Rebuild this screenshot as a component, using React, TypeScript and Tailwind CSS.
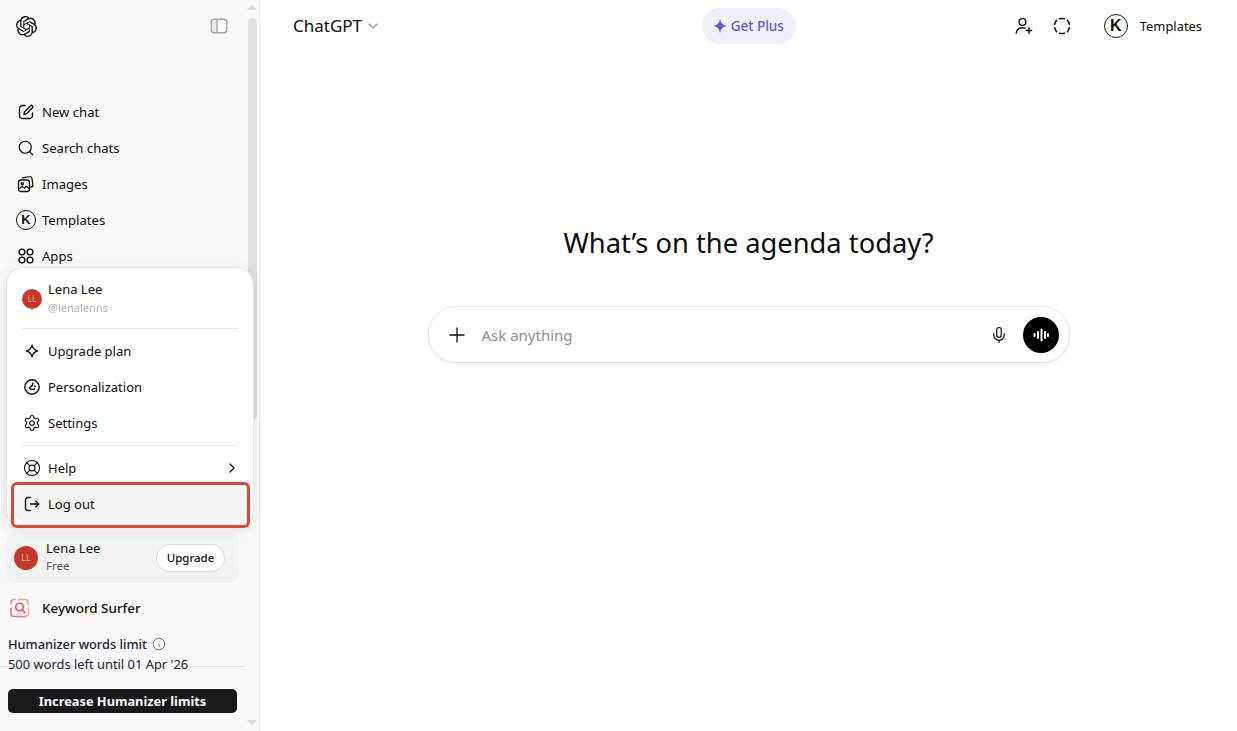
import { ChevronDown, ChevronRight, Info, Mic, Plus, Search, Settings, LifeBuoy } from "lucide-react";
import { SiOpenai } from "react-icons/si";

function KBadge({ size }: { size: "sm" | "lg" }) {
  return (
    <span
      className={
        size === "lg"
          ? "flex h-6 w-6 shrink-0 items-center justify-center rounded-full border-[1.5px] border-[#0d0d0d] font-['Liberation_Sans',sans-serif] text-[16px] font-bold text-[#0d0d0d]"
          : "flex h-5 w-5 shrink-0 items-center justify-center rounded-full border-[1.5px] border-[#0d0d0d] font-['Liberation_Sans',sans-serif] text-[13px] font-bold text-[#0d0d0d]"
      }
    >
      K
    </span>
  );
}

function PenIcon() {
  return (
    <svg width="18" height="18" viewBox="0 0 18 18" fill="none" stroke="#0d0d0d" strokeWidth="1.4" strokeLinecap="round" strokeLinejoin="round">
      <path d="M8 2.500H5.500a3 3 0 0 0-3 3v7a3 3 0 0 0 3 3h7a3 3 0 0 0 3-3V10" />
      <path d="M7 11.200l.5-2.500 6-6a1.400 1.400 0 0 1 2 2l-6 6-2.500.5z" />
    </svg>
  );
}

function ImagesIcon() {
  return (
    <svg width="18" height="18" viewBox="0 0 18 18" fill="none" stroke="#0d0d0d" strokeWidth="1.3" strokeLinecap="round" strokeLinejoin="round">
      <rect x="1.500" y="5" width="11" height="11.500" rx="2.500" />
      <path d="M5.500 2.800l7-1.200a2 2 0 0 1 2.400 1.700l1 6.200a2.400 2.400 0 0 1-2 2.700" />
      <circle cx="5.300" cy="8.800" r="1.100" />
      <path d="M1.800 14l3.400-2.600 2.200 1.700 2-1.900 2.600 2.400" />
    </svg>
  );
}

function AppsIcon() {
  return (
    <svg width="18" height="18" viewBox="0 0 18 18" fill="none" stroke="#0d0d0d" strokeWidth="1.4">
      <circle cx="5" cy="5" r="2.900" />
      <circle cx="13" cy="5" r="2.900" />
      <circle cx="5" cy="13" r="2.900" />
      <circle cx="13" cy="13" r="2.900" />
    </svg>
  );
}

function SparkleIcon() {
  return (
    <svg width="16" height="16" viewBox="0 0 16 16" fill="none" stroke="#0d0d0d" strokeWidth="1.300" strokeLinejoin="round">
      <path d="M8 2c.5 3 2.300 5.200 5.600 6-3.300.8-5.100 3-5.600 6-.5-3-2.300-5.200-5.600-6 3.300-.8 5.100-3 5.600-6z" />
    </svg>
  );
}

function PersonalizeIcon() {
  return (
    <svg width="18" height="18" viewBox="0 0 18 18" fill="none" stroke="#0d0d0d" strokeWidth="1.400" strokeLinecap="round">
      <circle cx="9" cy="9" r="7.200" />
      <path d="M9.800 5c.1 2-1 3.600-3.400 4.600.3 1.700 2.800 2.700 5.200 1.200" />
      <circle cx="11.800" cy="8.200" r=".3" />
    </svg>
  );
}

function LogoutIcon() {
  return (
    <svg width="18" height="18" viewBox="0 0 18 18" fill="none" stroke="#0d0d0d" strokeWidth="1.400" strokeLinecap="round" strokeLinejoin="round">
      <path d="M7.500 2.500H5a2.500 2.500 0 0 0-2.500 2.500v8A2.500 2.500 0 0 0 5 15.500h2.500" />
      <path d="M7.500 9H15.500M12.800 6l3 3-3 3" />
    </svg>
  );
}

function PanelIcon() {
  return (
    <svg width="18" height="18" viewBox="0 0 18 18" fill="none" stroke="#a3a3a3" strokeWidth="1.400">
      <rect x="2" y="3" width="5" height="12" rx="2" fill="#ececec" stroke="none" />
      <rect x="1.200" y="2.200" width="15.600" height="13.600" rx="3" />
      <path d="M7 2.500v13" />
    </svg>
  );
}

function AddUserIcon() {
  return (
    <svg width="18" height="18" viewBox="0 0 18 18" fill="none" stroke="#0d0d0d" strokeWidth="1.400" strokeLinecap="round">
      <circle cx="7.500" cy="5" r="3.400" />
      <path d="M1.200 16c.4-3.200 3-5.300 6.300-5.300 1 0 1.800.2 2.500.5" />
      <path d="M14 10.800v5.400M11.300 13.500h5.400" />
    </svg>
  );
}

function TempChatIcon() {
  return (
    <svg width="18" height="18" viewBox="0 0 18 18" fill="none" stroke="#0d0d0d" strokeWidth="1.500" strokeLinecap="round">
      <path d="M6.500 1.800c1.600-.4 3.400-.4 5 0" />
      <path d="M14.400 3.400c1 1 1.700 2.400 1.900 4" />
      <path d="M16.300 10.700c-.2 1.500-.9 2.900-1.900 3.900" />
      <path d="M11.500 16.200c-1.600.4-3.400.4-5 0" />
      <path d="M3.600 14.600c-1-1-1.700-2.400-1.900-3.900" />
      <path d="M1.700 7.400c.2-1.600.9-3 1.900-4" />
    </svg>
  );
}

function WaveIcon() {
  return (
    <svg width="20" height="20" viewBox="0 0 20 20" fill="none" stroke="#fff" strokeWidth="2" strokeLinecap="round">
      <path d="M3.500 9v2M7 7v6M10.500 4.500v11M14 7v6M17 9v2" />
    </svg>
  );
}

function GetPlusStar() {
  return (
    <svg width="14" height="14" viewBox="0 0 14 14" fill="#5e5cd6">
      <path d="M7 0c.6 4 2.800 6.300 7 7-4.200.7-6.400 3-7 7-.6-4-2.800-6.300-7-7 4.200-.7 6.400-3 7-7z" />
    </svg>
  );
}

function SurferLogo() {
  return (
    <svg width="20" height="20" viewBox="0 0 20 20" fill="none" strokeWidth="1.600" strokeLinecap="round">
      <path d="M5 1.500H4A3 3 0 0 0 1 4.500V6" stroke="#f98b8b" />
      <path d="M1 10v5.500a3 3 0 0 0 3 3h11" stroke="#f9648c" />
      <path d="M9 1.500h6a3 3 0 0 1 3 3v2" stroke="#f9a08b" />
      <path d="M18.500 10v5a3 3 0 0 1-2 3" stroke="#fbb36a" />
      <circle cx="9.500" cy="9" r="3.800" stroke="#f0506e" />
      <path d="M12.400 12l2.600 2.600" stroke="#f0506e" />
    </svg>
  );
}

const navItems = [
  { label: "New chat", icon: <PenIcon /> },
  { label: "Search chats", icon: <Search size={18} strokeWidth={1.6} color="#0d0d0d" /> },
  { label: "Images", icon: <ImagesIcon /> },
  { label: "Templates", icon: <KBadge size="sm" /> },
  { label: "Apps", icon: <AppsIcon /> },
];

function MenuRow({ icon, label, trailing }: { icon: React.ReactNode; label: string; trailing?: React.ReactNode }) {
  return (
    <div className="flex h-9 items-center gap-[7px] px-2">
      <span className="flex w-[18px] shrink-0 justify-center">{icon}</span>
      <span className="text-[13px] leading-[20px] text-[#0d0d0d]">{label}</span>
      {trailing ? <span className="mr-[-3px] ml-auto">{trailing}</span> : null}
    </div>
  );
}

function AccountMenu() {
  return (
    <div className="absolute top-[267px] left-[6px] z-10 w-[248px] rounded-[18px] border border-[#e5e5e5] bg-white px-[8px] pt-[4px] pb-[5px] shadow-[0_2px_12px_rgba(0,0,0,0.1)]">
      <div className="flex h-[56px] items-center gap-[6px] px-[7px]">
        <span className="mt-[-2px] flex h-5 w-5 items-center justify-center rounded-full bg-[#c5392d] text-[8px] text-[#e9b3ae]">LL</span>
        <div className="mt-[-6px] flex flex-col">
          <span className="text-[13px] leading-[20px] text-[#0d0d0d]">Lena Lee</span>
          <span className="text-[11px] leading-[17px] text-[#b4b4b4] blur-[0.6px]">@lenalenns</span>
        </div>
      </div>
      <div className="mx-[7px] border-t border-[#e5e5e5]" />
      <div className="mt-[4px]">
        <MenuRow icon={<SparkleIcon />} label="Upgrade plan" />
        <MenuRow icon={<PersonalizeIcon />} label="Personalization" />
        <MenuRow icon={<Settings size={18} strokeWidth={1.5} color="#0d0d0d" />} label="Settings" />
      </div>
      <div className="mx-[7px] my-[4px] border-t border-[#e5e5e5]" />
      <MenuRow
        icon={<LifeBuoy size={18} strokeWidth={1.5} color="#0d0d0d" />}
        label="Help"
        trailing={<ChevronRight size={16} strokeWidth={1.8} color="#0d0d0d" />}
      />
      <div className="rounded-[10px] bg-[#f4f4f4]">
        <MenuRow icon={<LogoutIcon />} label="Log out" />
      </div>
      <div className="absolute right-[3px] bottom-[-1px] left-[4px] h-[46px] rounded-[6px] border-[3px] border-[#e8432a]" />
    </div>
  );
}

function Sidebar() {
  return (
    <aside className="relative flex h-full w-[260px] shrink-0 border-r border-[#ececec] bg-[#f9f9f9]">
      <div className="flex min-w-0 flex-1 flex-col">
        <div className="flex h-[52px] items-center justify-between pr-[17px] pl-[16px]">
          <SiOpenai size={21} color="#0d0d0d" />
          <PanelIcon />
        </div>
        <nav className="mt-[42px]">
          {navItems.map((item) => (
            <div key={item.label} className="flex h-9 items-center gap-[6px] pl-[16px]">
              <span className="flex w-[20px] shrink-0 justify-center">{item.icon}</span>
              <span className="text-[13.100px] leading-[20px] text-[#0d0d0d]">{item.label}</span>
            </div>
          ))}
        </nav>
        <div className="mt-auto pb-[18px]">
          <div className="mx-[6px] flex h-[51px] items-center rounded-[10px] bg-[#f3f3f3] pr-[14px] pl-[8px]">
            <span className="flex h-6 w-6 items-center justify-center rounded-full bg-[#c5392d] text-[9px] text-[#e9b3ae]">LL</span>
            <div className="mt-[-4px] ml-[8px] flex flex-col">
              <span className="text-[13px] leading-[20px] text-[#0d0d0d]">Lena Lee</span>
              <span className="text-[11.500px] leading-[16px] text-[#5d5d5d]">Free</span>
            </div>
            <span className="ml-auto flex h-[28px] w-[69px] items-center justify-center rounded-full border border-[#dcdcdc] bg-white text-[11.500px] font-medium text-[#0d0d0d]">Upgrade</span>
          </div>
          <div className="mt-[13px] flex h-[24px] items-center gap-[12px] pl-[10px]">
            <SurferLogo />
            <span className="text-[13.400px] font-medium text-[#0d0d0d]">Keyword Surfer</span>
          </div>
          <div className="mt-[14px] flex items-center gap-[5px] pl-[8px]">
            <span className="text-[12.800px] leading-[20px] font-medium text-[#1a2433]">Humanizer words limit</span>
            <Info size={14} strokeWidth={1.5} color="#5b6472" />
          </div>
          <div className="pl-[8px] text-[12.900px] leading-[20px] text-[#1a2433]">500 words left until 01 Apr '26</div>
          <div className="mt-[-8px] w-[245px] border-t border-[#e6e6e6]" />
          <div className="mx-[8px] mt-[22px] flex h-[24px] items-center justify-center rounded-[5px] bg-[#18181b] text-[12.800px] leading-[20px] font-bold text-white">
            Increase Humanizer limits
          </div>
        </div>
      </div>
      <div className="flex w-[14px] shrink-0 flex-col items-center pb-[4px]">
        <span className="mt-[5px] h-0 w-0 border-x-[5px] border-b-[5px] border-x-transparent border-b-[#d8d8d8]" />
        <span className="mt-[8px] h-[402px] w-[9px] rounded-full bg-[#e0e0e0]" />
        <span className="mt-auto mb-[2px] h-0 w-0 border-x-[5px] border-t-[5px] border-x-transparent border-t-[#d8d8d8]" />
      </div>
      <AccountMenu />
    </aside>
  );
}

function Header() {
  return (
    <header className="flex h-[52px] items-center justify-between pr-[35px] pl-[33px]">
      <div className="flex w-[303px] items-center gap-[3px]">
        <span className="text-[17px] leading-[26px] text-[#0d0d0d]">ChatGPT</span>
        <ChevronDown size={16} strokeWidth={1.6} color="#8f8f8f" />
      </div>
      <div className="flex h-[36px] items-center gap-[4px] rounded-full bg-[#f0effa] pr-[12px] pl-[10.500px]">
        <GetPlusStar />
        <span className="text-[13.500px] font-medium text-[#5e5cd6]">Get Plus</span>
      </div>
      <div className="flex w-[300px] items-center justify-end">
        <AddUserIcon />
        <span className="ml-[20px]">
          <TempChatIcon />
        </span>
        <span className="ml-[33px]">
          <KBadge size="lg" />
        </span>
        <span className="ml-[12px] text-[12.900px] leading-[20px] text-[#0d0d0d]">Templates</span>
      </div>
    </header>
  );
}

function Composer() {
  return (
    <div className="flex h-[57px] w-[642px] items-center rounded-[28px] border border-[#e3e3e3] bg-white pr-[10px] pl-[16px] shadow-[0_2px_4px_rgba(0,0,0,0.06)]">
      <Plus size={24} strokeWidth={1.3} color="#0d0d0d" />
      <span className="ml-[13px] text-[15px] leading-[24px] text-[#8f8f8f]">Ask anything</span>
      <Mic size={18} strokeWidth={1.6} color="#0d0d0d" className="mr-[15px] ml-auto" />
      <span className="flex h-9 w-9 items-center justify-center rounded-full bg-black">
        <WaveIcon />
      </span>
    </div>
  );
}

export default function App() {
  return (
    <div className="flex h-[731px] w-[1237px] overflow-hidden bg-white font-['Noto_Sans',sans-serif]">
      <Sidebar />
      <main className="flex min-w-0 flex-1 flex-col">
        <Header />
        <div className="flex flex-col items-center pt-[157px]">
          <h1 className="text-[27.300px] leading-[68px] font-normal text-[#0d0d0d]">What’s on the agenda today?</h1>
          <div className="mt-[29px]">
            <Composer />
          </div>
        </div>
      </main>
    </div>
  );
}
